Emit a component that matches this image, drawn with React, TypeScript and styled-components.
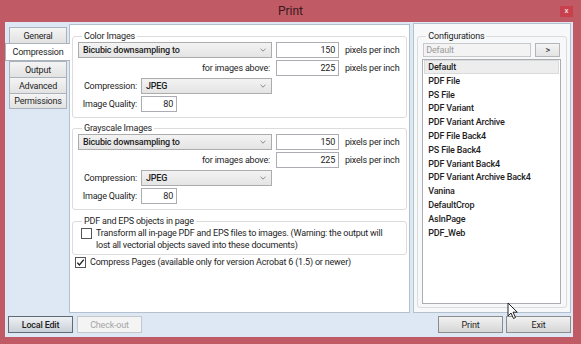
import React from 'react';
import styled, { createGlobalStyle } from 'styled-components';

const GlobalStyle = createGlobalStyle`
  html, body {
    margin: 0;
    padding: 0;
    background: #c05a65;
  }
  body {
    font-family: Roboto, "Liberation Sans", Arial, sans-serif;
    font-size: 9px;
    letter-spacing: -0.2px;
    color: #1e1e1e;
  }
`;

const Window = styled.div`
  position: relative;
  width: 581px;
  height: 344px;
  background: #c05a65;
  display: flex;
  flex-direction: column;
  overflow: hidden;
`;

const TitleBar = styled.div`
  position: relative;
  height: 22px;
  display: flex;
  align-items: center;
  justify-content: center;
  font-size: 12px;
  letter-spacing: 0;
  color: #3a181c;
`;

const CloseButton = styled.div`
  position: absolute;
  right: 8px;
  top: 6px;
  width: 13px;
  height: 11px;
  background: #c8404b;
  color: #fff;
  font-size: 8px;
  line-height: 10px;
  text-align: center;
`;

const Client = styled.div`
  flex: 1;
  margin: 0 8px 7px 5px;
  background: #dde8f4;
  display: flex;
  flex-direction: column;
  padding: 2px 2px 4px 0;
`;

const TopRow = styled.div`
  display: flex;
  height: 289px;
`;

const TabColumn = styled.div`
  width: 64px;
  margin-top: 3px;
  display: flex;
  flex-direction: column;
`;

const Tab = styled.div<{ $active?: boolean }>`
  position: relative;
  z-index: ${(p) => (p.$active ? 1 : 0)};
  box-sizing: border-box;
  height: ${(p) => (p.$active ? '18px' : '16px')};
  width: ${(p) => (p.$active ? '65px' : '58px')};
  margin-left: ${(p) => (p.$active ? '0' : '4px')};
  border: 1px solid #aab2bb;
  border-right: ${(p) => (p.$active ? 'none' : '1px solid #aab2bb')};
  border-bottom: ${(p) => (p.$active ? '1px solid #aab2bb' : 'none')};
  background: ${(p) =>
    p.$active ? '#ffffff' : 'linear-gradient(#f4f4f4, #e2e2e2)'};
  display: flex;
  align-items: center;
  justify-content: center;
  &:last-child {
    border-bottom: 1px solid #aab2bb;
  }
`;

const MainPanel = styled.div`
  box-sizing: border-box;
  width: 342px;
  height: 289px;
  background: #fff;
  border: 1px solid #b3c0cd;
  padding: 5px 2px 0 2px;
  display: flex;
  flex-direction: column;
`;

const Group = styled.fieldset<{ $gap?: number; $bottom?: number }>`
  margin: ${(p) => p.$gap ?? 0}px 0 0 0;
  padding: 0 4px ${(p) => p.$bottom ?? 5}px 5px;
  border: 1px solid #dcdcdc;
  border-radius: 3px;
  min-width: 0;
`;

const Legend = styled.legend`
  padding: 0 2px;
  margin-left: 4px;
  font-size: 9px;
  line-height: 12px;
  color: #1e1e1e;
`;

const FormGrid = styled.div`
  display: grid;
  grid-template-columns: 59px 131px 63px auto;
  grid-auto-rows: 16px;
  column-gap: 4px;
  row-gap: 2px;
  align-items: center;
`;

const SelectBox = styled.div<{ $span?: boolean }>`
  grid-column: ${(p) => (p.$span ? '1 / 3' : 'auto')};
  box-sizing: border-box;
  height: 16px;
  border: 1px solid #acacac;
  background: linear-gradient(#f3f3f3, #e4e4e4);
  display: flex;
  align-items: center;
  justify-content: space-between;
  padding: 0 5px 0 4px;
  font-weight: 500;
`;

const Chevron = () => (
  <svg width="6" height="4" viewBox="0 0 6 4">
    <path d="M0.5 0.8 L3 3.2 L5.5 0.8" fill="none" stroke="#8a8a8a" strokeWidth="1" />
  </svg>
);

const NumberInput = styled.div<{ $width?: number }>`
  box-sizing: border-box;
  width: ${(p) => (p.$width ? `${p.$width}px` : '100%')};
  height: 16px;
  border: 1px solid #abadb3;
  background: #fff;
  text-align: right;
  padding-right: 3px;
  line-height: 14px;
`;

const FieldLabel = styled.div<{ $span?: boolean }>`
  grid-column: ${(p) => (p.$span ? '1 / 3' : 'auto')};
  text-align: right;
  padding-right: ${(p) => (p.$span ? '2px' : '0')};
  white-space: nowrap;
`;

const Unit = styled.div`
  padding-left: 2px;
  white-space: nowrap;
`;

const CheckRow = styled.div<{ $indent: number; $textGap: number; $gap?: number }>`
  display: flex;
  align-items: flex-start;
  margin: ${(p) => p.$gap ?? 0}px 0 0 ${(p) => p.$indent}px;
  line-height: 12px;
  & > span {
    margin-left: ${(p) => p.$textGap}px;
  }
`;

const Box = styled.div`
  box-sizing: border-box;
  flex: none;
  width: 11px;
  height: 11px;
  margin-top: 1px;
  border: 1px solid #555;
  background: #fff;
  display: flex;
  align-items: center;
  justify-content: center;
`;

const CheckBox = ({ checked }: { checked?: boolean }) => (
  <Box>
    {checked && (
      <svg width="9" height="9" viewBox="0 0 9 9">
        <path d="M1.3 4.6 L3.4 7 L7.8 1.6" fill="none" stroke="#222" strokeWidth="1.4" />
      </svg>
    )}
  </Box>
);

const SidePanel = styled.div`
  box-sizing: border-box;
  width: 158px;
  height: 290px;
  margin: -1px 0 0 3px;
  background: #f7f8f9;
  border: 1px solid #b3c0cd;
  padding: 6px 3px 4px 3px;
  display: flex;
`;

const ConfigGroup = styled.fieldset`
  flex: 1;
  margin: 0;
  padding: 1px 4px 3px 4px;
  border: 1px solid #dcdcdc;
  border-radius: 3px;
  min-width: 0;
  display: flex;
  flex-direction: column;
`;

const ConfigBar = styled.div`
  display: flex;
  gap: 4px;
  margin-left: 1px;
`;

const NameInput = styled.div`
  box-sizing: border-box;
  width: 108px;
  height: 14px;
  border: 1px solid #c9c9c9;
  background: #f3f3f3;
  color: #9a9a9a;
  padding-left: 2px;
  line-height: 12px;
`;

const SmallButton = styled.div`
  box-sizing: border-box;
  width: 25px;
  height: 14px;
  border: 1px solid #b5b5b5;
  background: linear-gradient(#f4f4f4, #e3e3e3);
  text-align: center;
  line-height: 12px;
`;

const ConfigList = styled.div`
  box-sizing: border-box;
  width: 139px;
  flex: 1;
  margin-top: 2px;
  border: 1px solid #abadb3;
  background: #fff;
  padding: 0 1px;
`;

const ConfigItem = styled.div<{ $selected?: boolean }>`
  box-sizing: border-box;
  height: 13.8px;
  line-height: 12px;
  padding-left: 3px;
  border: 1px solid ${(p) => (p.$selected ? '#dadada' : 'transparent')};
  background: ${(p) => (p.$selected ? '#ededed' : 'transparent')};
  font-weight: 500;
  white-space: nowrap;
`;

const BottomRow = styled.div`
  display: flex;
  align-items: center;
  margin-top: 3px;
  padding-left: 3px;
`;

const ButtonGroup = styled.div<{ $gap: number }>`
  display: flex;
  gap: ${(p) => p.$gap}px;
`;

const Spacer = styled.div`
  flex: 1;
`;

const PushButton = styled.div<{ $disabled?: boolean; $strong?: boolean }>`
  box-sizing: border-box;
  width: 65px;
  height: 17px;
  display: flex;
  align-items: center;
  justify-content: center;
  border: 1px solid ${(p) => (p.$disabled ? '#c4c8cc' : p.$strong ? '#5f6a74' : '#8c8c8c')};
  background: ${(p) =>
    p.$disabled
      ? '#f4f4f4'
      : p.$strong
      ? 'linear-gradient(#eef1f4, #c9d0d7)'
      : 'linear-gradient(#f2f2f2, #d6d6d6)'};
  color: ${(p) => (p.$disabled ? '#a4a4a4' : '#1e1e1e')};
  font-weight: ${(p) => (p.$strong ? 500 : 400)};
`;

const Cursor = styled.svg`
  position: absolute;
  left: 507px;
  top: 302px;
`;

const configs = [
  'Default',
  'PDF File',
  'PS File',
  'PDF Variant',
  'PDF Variant Archive',
  'PDF File Back4',
  'PS File Back4',
  'PDF Variant Back4',
  'PDF Variant Archive Back4',
  'Vanina',
  'DefaultCrop',
  'AsInPage',
  'PDF_Web',
];

const tabs = ['General', 'Compression', 'Output', 'Advanced', 'Permissions'];

const ImageGroup = ({ title, gap }: { title: string; gap?: number }) => (
  <Group $gap={gap}>
    <Legend>{title}</Legend>
    <FormGrid>
      <SelectBox $span>
        Bicubic downsampling to
        <Chevron />
      </SelectBox>
      <NumberInput>150</NumberInput>
      <Unit>pixels per inch</Unit>
      <FieldLabel $span>for images above:</FieldLabel>
      <NumberInput>225</NumberInput>
      <Unit>pixels per inch</Unit>
      <FieldLabel>Compression:</FieldLabel>
      <SelectBox>
        JPEG
        <Chevron />
      </SelectBox>
      <div />
      <div />
      <FieldLabel>Image Quality:</FieldLabel>
      <NumberInput $width={36}>80</NumberInput>
    </FormGrid>
  </Group>
);

export default function App() {
  return (
    <>
      <GlobalStyle />
      <Window>
        <TitleBar>
          Print
          <CloseButton>x</CloseButton>
        </TitleBar>
        <Client>
          <TopRow>
            <TabColumn>
              {tabs.map((t) => (
                <Tab key={t} $active={t === 'Compression'}>
                  {t}
                </Tab>
              ))}
            </TabColumn>
            <MainPanel>
              <ImageGroup title="Color Images" />
              <ImageGroup title="Grayscale Images" gap={4} />
              <Group $gap={5} $bottom={3}>
                <Legend>PDF and EPS objects in page</Legend>
                <CheckRow $indent={3} $textGap={4}>
                  <CheckBox />
                  <span>
                    Transform all in-page PDF and EPS files to images. (Warning: the output will
                    <br />
                    lost all vectorial objects saved into these documents)
                  </span>
                </CheckRow>
              </Group>
              <CheckRow $indent={3} $textGap={4} $gap={1}>
                <CheckBox checked />
                <span>Compress Pages (available only for version Acrobat 6 (1.5) or newer)</span>
              </CheckRow>
            </MainPanel>
            <SidePanel>
              <ConfigGroup>
                <Legend>Configurations</Legend>
                <ConfigBar>
                  <NameInput>Default</NameInput>
                  <SmallButton>&gt;</SmallButton>
                </ConfigBar>
                <ConfigList>
                  {configs.map((c, i) => (
                    <ConfigItem key={c} $selected={i === 0}>
                      {c}
                    </ConfigItem>
                  ))}
                </ConfigList>
              </ConfigGroup>
            </SidePanel>
          </TopRow>
          <BottomRow>
            <ButtonGroup $gap={4}>
              <PushButton $strong>Local Edit</PushButton>
              <PushButton $disabled>Check-out</PushButton>
            </ButtonGroup>
            <Spacer />
            <ButtonGroup $gap={3}>
              <PushButton>Print</PushButton>
              <PushButton>Exit</PushButton>
            </ButtonGroup>
          </BottomRow>
        </Client>
        <Cursor width="12" height="18" viewBox="0 0 12 18">
          <path
            d="M1 1 L1 14 L4 11 L6.5 16.5 L8.5 15.5 L6 10.2 L10.3 10.2 Z"
            fill="#fff"
            stroke="#222"
            strokeWidth="1"
            strokeLinejoin="round"
          />
        </Cursor>
      </Window>
    </>
  );
}
